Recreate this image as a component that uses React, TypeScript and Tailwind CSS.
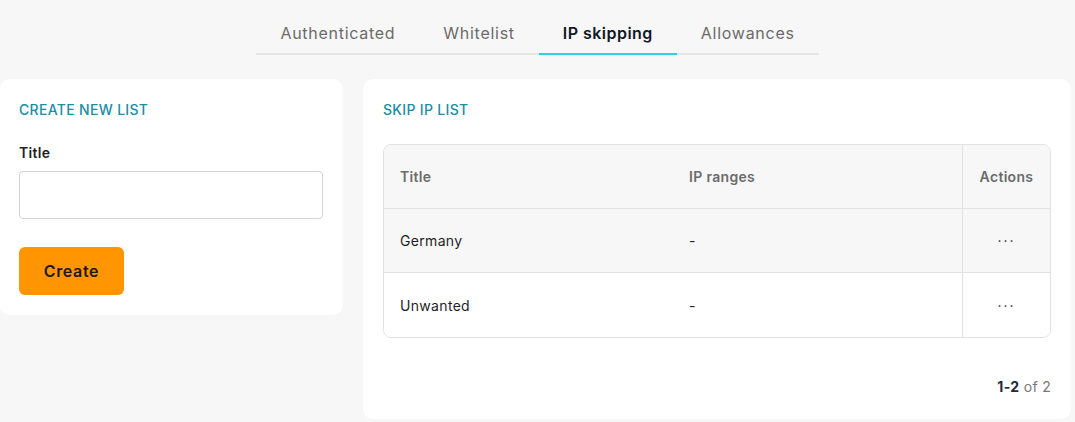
import React from "react";

const font = { fontFamily: "Inter, 'Noto Sans', sans-serif" };

export default function App() {
  const tabs = ["Authenticated", "Whitelist", "IP skipping", "Allowances"];
  const rows = ["Germany", "Unwanted"];
  return (
    <div className="w-[1075px] h-[422px] bg-[#f7f7f7] overflow-hidden tracking-[0.02em]" style={font}>
      <div className="flex justify-center pt-[22px]">
        <div className="flex border-b-2 border-[#e6e6e6]">
          {tabs.map((t) => (
            <div
              key={t}
              className={
                t === "IP skipping"
                  ? "px-6 pb-[9px] text-[16px] leading-[22px] font-semibold tracking-[0.03em] text-[#111827] border-b-2 border-[#2ad4e2] -mb-[2px]"
                  : "px-6 pb-[9px] text-[16px] leading-[22px] tracking-[0.045em] text-[#6b6b6b]"
              }
            >
              {t}
            </div>
          ))}
        </div>
      </div>
      <div className="flex items-start gap-5 pt-[24px] pr-[4px]">
        <div className="w-[343px] bg-white rounded-[10px] px-[19px] pt-[22px] pb-[20px]">
          <div className="text-[14px] leading-[18px] font-medium text-[#1a8ea3]">CREATE NEW LIST</div>
          <div className="mt-[25px] text-[14px] leading-[18px] font-semibold text-[#1f1f1f]">Title</div>
          <input className="mt-[9px] block w-[304px] h-[48px] border border-[#d3d3d3] rounded-[4px] outline-none px-3" />
          <button className="mt-[28px] w-[105px] h-[48px] rounded-[6px] bg-[#ff9500] text-[16px] font-semibold tracking-[0.04em] text-[#1a1a1a]">
            Create
          </button>
        </div>
        <div className="flex-1 bg-white rounded-[10px] px-[20px] pt-[22px] pb-[22px]">
          <div className="text-[14px] leading-[18px] font-medium text-[#1a8ea3]">SKIP IP LIST</div>
          <div className="mt-[25px] border border-[#e2e2e2] rounded-[8px] overflow-hidden">
            <div className="flex h-[64px] bg-[#f7f7f7] border-b border-[#e2e2e2] text-[14px] font-semibold text-[#6b6b6b]">
              <div className="w-[290px] pl-4 flex items-center">Title</div>
              <div className="flex-1 pl-[15px] flex items-center">IP ranges</div>
              <div className="w-[88px] border-l border-[#e2e2e2] flex items-center justify-center">Actions</div>
            </div>
            {rows.map((r, i) => (
              <div
                key={r}
                className={
                  (i === 0 ? "bg-[#f7f7f7] border-b border-[#e2e2e2] " : "bg-white ") +
                  "flex h-[64px] text-[14px] text-[#1f1f1f]"
                }
              >
                <div className="w-[290px] pl-4 flex items-center">{r}</div>
                <div className="flex-1 pl-[15px] flex items-center">-</div>
                <div className="w-[88px] border-l border-[#e2e2e2] flex items-center justify-center text-[#333] tracking-[2px]">
                  ···
                </div>
              </div>
            ))}
          </div>
          <div className="mt-[38px] text-right text-[14px] text-[#777]">
            <span className="font-bold text-[#1f2937]">1-2</span> of 2
          </div>
        </div>
      </div>
    </div>
  );
}
